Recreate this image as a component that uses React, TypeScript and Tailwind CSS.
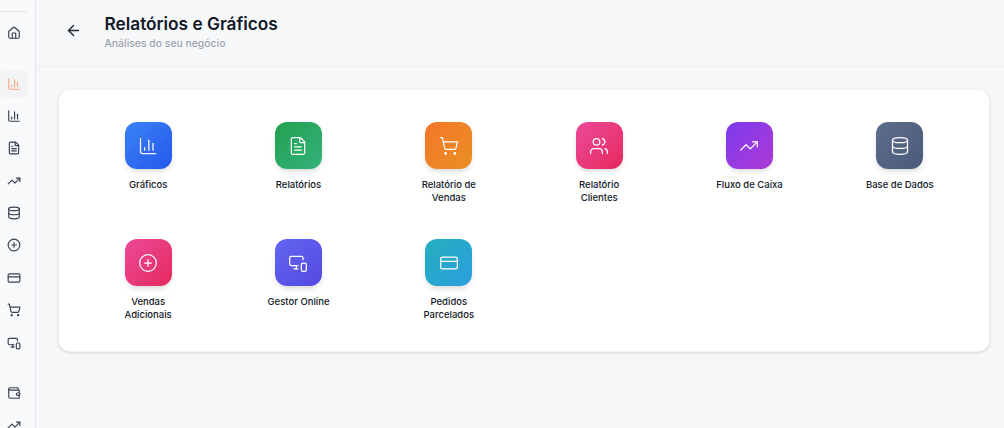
import {
  ArrowLeft,
  ChartColumn,
  CirclePlus,
  CreditCard,
  Database,
  FileText,
  House,
  MonitorSmartphone,
  ShoppingCart,
  TrendingUp,
  Users,
  Wallet,
} from 'lucide-react';

const tiles = [
  { label: 'Gráficos', icon: ChartColumn, bg: 'bg-gradient-to-br from-[#3b82f6] to-[#2557ea]' },
  { label: 'Relatórios', icon: FileText, bg: 'bg-gradient-to-br from-[#22a04f] to-[#34b27b]' },
  { label: 'Relatório de Vendas', icon: ShoppingCart, bg: 'bg-gradient-to-br from-[#f4762a] to-[#e98f22]' },
  { label: 'Relatório Clientes', icon: Users, bg: 'bg-gradient-to-br from-[#ec4899] to-[#e6265c]' },
  { label: 'Fluxo de Caixa', icon: TrendingUp, bg: 'bg-gradient-to-br from-[#7c3aed] to-[#ae36d6]' },
  { label: 'Base de Dados', icon: Database, bg: 'bg-gradient-to-br from-[#5c6e8c] to-[#4b5a7a]' },
  { label: 'Vendas Adicionais', icon: CirclePlus, bg: 'bg-gradient-to-br from-[#ec4899] to-[#e6265c]' },
  { label: 'Gestor Online', icon: MonitorSmartphone, bg: 'bg-gradient-to-br from-[#6366f1] to-[#5448e0]' },
  { label: 'Pedidos Parcelados', icon: CreditCard, bg: 'bg-gradient-to-br from-[#25aebd] to-[#2c9fdf]' },
];

const App = () => {
  return (
    <div className="flex h-[428px] w-[1004px] overflow-hidden bg-[#f6f7f9] font-['Inter',sans-serif]">
      {/* sidebar */}
      <div className="h-full w-[36px] shrink-0 overflow-hidden border-r border-[#e2e5ea] bg-[#f9fafb]">
        <div className="flex w-[28px] flex-col items-center">
          <div className="mt-[11px] h-px w-full shrink-0 bg-[#e5e7eb]" />
          <House className="mt-[14px] size-[14px] shrink-0 text-[#374151]" />
          <div className="mt-[30px] flex size-[28px] shrink-0 items-center justify-center rounded-lg bg-[#f3f4f6]">
            <ChartColumn className="size-[14px] text-[#f4a582]" />
          </div>
          <ChartColumn className="mt-[11px] size-[14px] shrink-0 text-[#374151]" />
          <FileText className="mt-[18px] size-[14px] shrink-0 text-[#374151]" />
          <TrendingUp className="mt-[19px] size-[14px] shrink-0 text-[#374151]" />
          <Database className="mt-[18px] size-[14px] shrink-0 text-[#374151]" />
          <CirclePlus className="mt-[18px] size-[14px] shrink-0 text-[#374151]" />
          <CreditCard className="mt-[19px] size-[14px] shrink-0 text-[#374151]" />
          <ShoppingCart className="mt-[18px] size-[14px] shrink-0 text-[#374151]" />
          <MonitorSmartphone className="mt-[19px] size-[14px] shrink-0 text-[#374151]" />
          <Wallet className="mt-[36px] size-[14px] shrink-0 text-[#374151]" />
          <TrendingUp className="mt-[18px] size-[14px] shrink-0 text-[#374151]" />
        </div>
      </div>

      <div className="flex min-w-0 flex-1 flex-col">
        {/* header */}
        <div className="flex h-[67px] shrink-0 items-start border-b border-[#eceef1] pl-[29px]">
          <ArrowLeft className="mt-[22px] size-[17px] text-[#1f2937]" />
          <div className="ml-[22.5px] mt-[13px] flex flex-col">
            <span className="text-[17.25px] font-semibold leading-[22px] text-[#111827]">Relatórios e Gráficos</span>
            <span className="mt-[2px] text-[10.4px] font-medium leading-[14px] text-[#9ca3af]">Análises do seu negócio</span>
          </div>
        </div>

        {/* card */}
        <div className="ml-[22px] mt-[22px] h-[263px] w-[932px] rounded-xl border border-[#f1f2f4] bg-white px-4 pt-[32px] shadow-sm">
          <div className="grid grid-cols-6 gap-x-1">
            {tiles.map(t => {
              const Icon = t.icon;
              return (
                <div key={t.label} className="flex h-[117px] flex-col items-center">
                  <div className={`flex size-[47px] items-center justify-center rounded-xl shadow-md ${t.bg}`}>
                    <Icon className="size-[20px] text-white" strokeWidth={1.5} />
                  </div>
                  <span className="mt-[10px] w-[72px] text-center text-[9.5px] font-medium leading-[12.5px] text-[#111827]">
                    {t.label}
                  </span>
                </div>
              );
            })}
          </div>
        </div>
      </div>
    </div>
  );
};

export default App;
